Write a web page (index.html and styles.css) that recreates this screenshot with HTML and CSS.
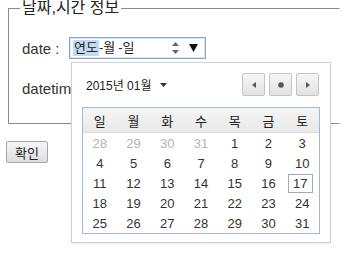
FILE: index.html
```html
<!DOCTYPE html>
<html lang="ko">
<head>
<meta charset="utf-8">
<title>날짜,시간 정보</title>
<link rel="stylesheet" href="styles.css">
</head>
<body>
<form class="page">
  <fieldset class="group">
    <legend class="legend">날짜,시간 정보</legend>
    <div class="row">
      <span class="lbl">date :</span>
      <div class="dateinput">
        <span class="seg sel">연도</span><span class="seg">-월</span><span class="seg gap">-일</span>
        <span class="spin">
          <svg width="9" height="14" viewBox="0 0 9 14"><path d="M4.5 1 L8 5 L1 5 Z" fill="#666"/><path d="M1 9 L8 9 L4.5 13 Z" fill="#666"/></svg>
        </span>
        <span class="drop">
          <svg width="9" height="8" viewBox="0 0 9 8"><path d="M0 0 L9 0 L4.5 8 Z" fill="#111"/></svg>
        </span>
      </div>
    </div>
    <div class="row">
      <span class="lbl">datetime-local :</span>
    </div>
  </fieldset>
  <button type="button" class="ok">확인</button>
  <div class="popup">
    <div class="pophead">
      <span class="month">2015년 01월 <svg class="caret" width="7" height="4" viewBox="0 0 7 4"><path d="M0 0 L7 0 L3.5 4 Z" fill="#333"/></svg></span>
      <div class="navs">
        <span class="nav"><svg width="4" height="6" viewBox="0 0 4 6"><path d="M4 0 L4 6 L0 3 Z" fill="#555"/></svg></span>
        <span class="nav"><svg width="6" height="6" viewBox="0 0 6 6"><circle cx="3" cy="3" r="2.8" fill="#555"/></svg></span>
        <span class="nav"><svg width="4" height="6" viewBox="0 0 4 6"><path d="M0 0 L4 3 L0 6 Z" fill="#555"/></svg></span>
      </div>
    </div>
    <div class="cal">
      <div class="dow"><span>일</span><span>월</span><span>화</span><span>수</span><span>목</span><span>금</span><span>토</span></div>
      <div class="days">
        <span class="other">28</span><span class="other">29</span><span class="other">30</span><span class="other">31</span><span>1</span><span>2</span><span>3</span>
        <span>4</span><span>5</span><span>6</span><span>7</span><span>8</span><span>9</span><span>10</span>
        <span>11</span><span>12</span><span>13</span><span>14</span><span>15</span><span>16</span><span class="today"><i>17</i></span>
        <span>18</span><span>19</span><span>20</span><span>21</span><span>22</span><span>23</span><span>24</span>
        <span>25</span><span>26</span><span>27</span><span>28</span><span>29</span><span>30</span><span>31</span>
      </div>
    </div>
  </div>
</form>
</body>
</html>
```

FILE: styles.css
```css
html, body {
  margin: 0;
  padding: 0;
  background: #fff;
}
body {
  font-family: "Liberation Sans", "Noto Sans CJK KR", sans-serif;
  color: #222;
  min-height: 264px;
}
.page {
  position: relative;
  padding: 0 0 0 6px;
  margin: 0;
  min-height: 264px;
}
.group {
  box-sizing: border-box;
  width: 332px;
  margin: 0 0 0 2px;
  padding: 21px 13px 24px;
  border: 1px solid #8c8c8c;
  border-right-color: transparent;
  min-width: 0;
}
.legend {
  font-size: 16px;
  line-height: 16px;
  padding: 0 2px;
  margin-left: -2px;
  color: #222;
}
.row {
  display: flex;
  align-items: center;
  height: 22px;
}
.row + .row {
  margin-top: 18px;
}
.lbl {
  font-size: 15px;
  color: #333;
  white-space: nowrap;
  width: 47px;
}
.dateinput {
  box-sizing: border-box;
  width: 137px;
  height: 22px;
  border: 1px solid #86a9dc;
  box-shadow: inset 0 0 0 1px #d4e2f4;
  display: flex;
  align-items: center;
  padding-left: 3px;
  font-size: 13px;
  color: #222;
}
.seg {
  line-height: 16px;
}
.sel {
  background: #c5daf4;
  padding: 0 1px;
}
.gap {
  margin-left: 3px;
}
.spin {
  margin-left: auto;
  display: flex;
  align-items: center;
}
.drop {
  display: flex;
  align-items: center;
  margin: 0 7px 0 9px;
}
.popup {
  position: absolute;
  left: 71px;
  top: 62px;
  box-sizing: border-box;
  width: 260px;
  height: 181px;
  background: #fff;
  border: 1px solid #cfcfcf;
  box-shadow: 0 1px 2px rgba(0,0,0,0.08);
  padding: 10px 10px 9px;
  z-index: 2;
}
.pophead {
  display: flex;
  align-items: center;
  justify-content: space-between;
  height: 23px;
  padding-left: 4px;
}
.month {
  font-size: 12px;
  color: #222;
  display: flex;
  align-items: center;
  gap: 5px;
  white-space: nowrap;
}
.caret {
  margin-left: 4px;
}
.navs {
  display: flex;
  gap: 4px;
  margin-right: 1px;
}
.nav {
  box-sizing: border-box;
  width: 23px;
  height: 23px;
  border: 1px solid #c4c4c4;
  border-radius: 2px;
  background: linear-gradient(#f7f7f7, #e2e2e2);
  display: flex;
  align-items: center;
  justify-content: center;
}
.cal {
  margin-top: 11px;
  border: 1px solid #9cb8e4;
  box-sizing: border-box;
  width: 238px;
}
.dow, .days {
  display: grid;
  grid-template-columns: repeat(7, 1fr);
}
.dow {
  height: 24px;
  background: linear-gradient(#f5f5f5, #e9e9e9);
  border-bottom: 1px solid #dedede;
  font-size: 13px;
  color: #222;
}
.dow span, .days span {
  display: flex;
  align-items: center;
  justify-content: center;
}
.days {
  grid-auto-rows: 20px;
  font-size: 13px;
  color: #333;
}
.days .other {
  color: #b4b4b4;
}
.today i {
  font-style: normal;
  box-sizing: border-box;
  width: 25px;
  height: 19px;
  border: 1px solid #a8a8a8;
  display: flex;
  align-items: center;
  justify-content: center;
  margin-left: -4px;
}
.ok {
  display: block;
  margin-top: 17px;
  box-sizing: border-box;
  width: 42px;
  height: 22px;
  padding: 0;
  font-family: "Liberation Sans", "Noto Sans CJK KR", sans-serif;
  font-size: 13px;
  color: #222;
  border: 1px solid #a6a6a6;
  border-radius: 2px;
  background: linear-gradient(#f6f6f6, #dedede);
}
```
